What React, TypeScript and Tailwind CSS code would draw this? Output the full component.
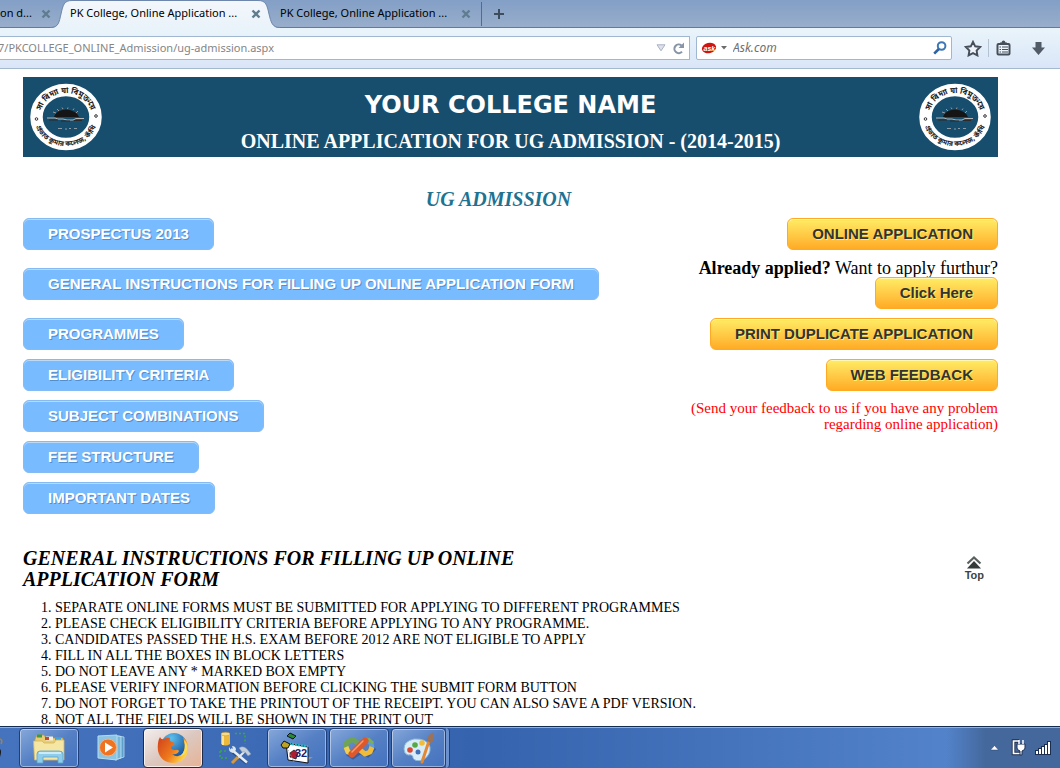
import React from "react";
import type { ReactNode } from "react";

const instructions = [
  "SEPARATE ONLINE FORMS MUST BE SUBMITTED FOR APPLYING TO DIFFERENT PROGRAMMES",
  "PLEASE CHECK ELIGIBILITY CRITERIA BEFORE APPLYING TO ANY PROGRAMME.",
  "CANDIDATES PASSED THE H.S. EXAM BEFORE 2012 ARE NOT ELIGIBLE TO APPLY",
  "FILL IN ALL THE BOXES IN BLOCK LETTERS",
  "DO NOT LEAVE ANY * MARKED BOX EMPTY",
  "PLEASE VERIFY INFORMATION BEFORE CLICKING THE SUBMIT FORM BUTTON",
  "DO NOT FORGET TO TAKE THE PRINTOUT OF THE RECEIPT. YOU CAN ALSO SAVE A PDF VERSION.",
  "NOT ALL THE FIELDS WILL BE SHOWN IN THE PRINT OUT",
];

function CloseIcon() {
  return (
    <svg width="10" height="10" viewBox="0 0 10 10" aria-hidden="true">
      <path d="M1.5 1.5L8.5 8.5M8.5 1.5L1.5 8.5" stroke="#5f7d8f" strokeWidth="2.4" />
    </svg>
  );
}

function Tab({ title, widthClass, active = false }: { title: string; widthClass: string; active?: boolean }) {
  return (
    <div className={`relative flex h-7 shrink-0 items-center ${widthClass}`}>
      {active && (
        <svg className="absolute top-0 -left-5 h-7 w-[230px]" viewBox="0 0 230 28" preserveAspectRatio="none" aria-hidden="true">
          <defs>
            <linearGradient id="tabFill" x1="0" y1="0" x2="0" y2="1">
              <stop offset="0" stopColor="#f3f7fc" />
              <stop offset="1" stopColor="#eaf3fa" />
            </linearGradient>
          </defs>
          <path
            d="M0 28C9 28 9 22 11 14C13 5 14 0.5 22 0.5H208C216 0.5 217 5 219 14C221 22 222 28 230 28Z"
            fill="url(#tabFill)"
          />
          <path
            d="M0 27.5C9 27.5 9 22 11 14C13 5 14 0.5 22 0.5H208C216 0.5 217 5 219 14C221 22 222 27.5 230 27.5"
            fill="none"
            stroke="#6c87ab"
          />
        </svg>
      )}
      <button type="button" role="tab" aria-selected={active} className="relative grow overflow-hidden text-left whitespace-nowrap">
        {title}
      </button>
      <button type="button" aria-label="Close tab" className="relative shrink-0">
        <CloseIcon />
      </button>
    </div>
  );
}

function BrowserChrome() {
  return (
    <header className="shrink-0 font-['Noto_Sans','Open_Sans',sans-serif] text-[11px] text-black">
      <div role="tablist" className="flex h-7 items-center border-b border-[#5f7ba3] bg-linear-to-b from-[#839fc6] to-[#98aecb]">
        <Tab title="on d..." widthClass="w-[51px]" />
        <div className="w-[19px] shrink-0" />
        <Tab title="PK College, Online Application ..." widthClass="w-[191px]" active />
        <div className="w-[19px] shrink-0" />
        <Tab title="PK College, Online Application ..." widthClass="w-[191px]" />
        <div className="ml-2.5 h-6 w-px shrink-0 bg-[#526c8f]" />
        <button type="button" aria-label="Open a new tab" className="ml-3">
          <svg width="10" height="10" viewBox="0 0 10 10" aria-hidden="true">
            <path d="M5 0V10M0 5H10" stroke="#3f4c5d" strokeWidth="2" />
          </svg>
        </button>
      </div>
      <div className="flex h-[41px] items-center border-b border-[#a3b9cd] bg-linear-to-b from-[#e9f4fa] to-[#dae6f8]">
        <div className="flex h-6 min-w-0 grow items-center border border-l-0 border-[#a0b8cf] bg-white">
          <input
            type="text"
            aria-label="Address"
            defaultValue="7/PKCOLLEGE_ONLINE_Admission/ug-admission.aspx"
            className="-ml-0.5 min-w-0 grow text-[#858585] outline-none"
          />
          <button type="button" aria-label="Show history">
            <svg width="10" height="8" viewBox="0 0 10 8" aria-hidden="true">
              <path d="M1 0.8H9L5 6.8Z" fill="#dfe2ec" stroke="#a9b1c4" />
            </svg>
          </button>
          <button type="button" aria-label="Reload" className="mr-1 ml-1.5">
            <svg width="13" height="13" viewBox="0 0 13 13" aria-hidden="true">
              <path d="M9.5 3.5A4.3 4.3 0 1 0 10 9.6" fill="none" stroke="#8795a6" strokeWidth="2.1" />
              <path d="M12 0.5V6H6.5Z" fill="#8795a6" />
            </svg>
          </button>
        </div>
        <div className="ml-1.5 flex h-6 w-64 shrink-0 items-center rounded-xs border border-[#a0b8cf] bg-white">
          <button type="button" aria-label="Choose search engine" className="ml-1 flex items-center gap-1">
            <svg width="16" height="14" viewBox="0 0 16 14" aria-hidden="true">
              <ellipse cx="8" cy="7" rx="7.2" ry="5.2" fill="#d3130d" transform="rotate(-15 8 7)" />
              <text x="2.5" y="9.5" fontSize="7" fontWeight="bold" fontStyle="italic" fill="#fff" fontFamily="Liberation Sans, sans-serif">ask</text>
            </svg>
            <svg width="6" height="4" viewBox="0 0 6 4" aria-hidden="true">
              <path d="M0 0H6L3 3.6Z" fill="#6c6c6c" />
            </svg>
          </button>
          <input type="text" aria-label="Search" placeholder="Ask.com" className="ml-1.5 min-w-0 grow text-xs italic outline-none placeholder:text-[#707070]" />
          <button type="button" aria-label="Run search" className="mr-1">
            <svg width="14" height="14" viewBox="0 0 14 14" aria-hidden="true">
              <circle cx="8.6" cy="5" r="3.8" fill="none" stroke="#3d78b4" strokeWidth="2" />
              <path d="M5.8 8L1.2 12.6" stroke="#2e62a3" strokeWidth="2.6" />
            </svg>
          </button>
        </div>
        <button type="button" aria-label="Bookmark this page" className="ml-3 shrink-0">
          <svg width="18" height="17" viewBox="0 0 18 17" aria-hidden="true">
            <path d="M9 1.8L11.2 6.3L16.1 7L12.6 10.5L13.4 15.4L9 13.1L4.6 15.4L5.4 10.5L1.9 7L6.8 6.3Z" fill="#eef4fa" stroke="#454e5a" strokeWidth="1.9" />
          </svg>
        </button>
        <div className="ml-1.5 h-[18px] w-px shrink-0 bg-[#b4c3d4]" />
        <button type="button" aria-label="Show bookmarks" className="ml-[7px] shrink-0">
          <svg width="15" height="16" viewBox="0 0 15 16" aria-hidden="true">
            <rect x="1.5" y="4" width="12" height="10.5" rx="1" fill="#edf3fa" stroke="#454e5a" strokeWidth="2" />
            <path d="M4 5V2.500H5.500Q6 0.500 7.500 0.500Q9 0.500 9.500 2.500H11V5Z" fill="#454e5a" />
            <path d="M3.500 7H5M6 7H12M3.500 9.500H5M6 9.500H12M3.500 12H5M6 12H12" stroke="#454e5a" strokeWidth="1.200" />
          </svg>
        </button>
        <button type="button" aria-label="Downloads" className="mr-3.5 ml-5 shrink-0">
          <svg width="15" height="15" viewBox="0 0 15 15" aria-hidden="true">
            <path d="M4.500 1H10.500V6.500H14L7.500 14L1 6.500H4.500Z" fill="#515a67" />
          </svg>
        </button>
      </div>
    </header>
  );
}

function CollegeSeal({ id }: { id: string }) {
  return (
    <svg className="h-[68px] w-[74px] shrink-0 overflow-visible" viewBox="0 0 74 68" role="img" aria-label="College seal">
      <defs>
        <path id={`${id}-upper`} d="M11 34A26 24 0 0 1 63 34" />
        <path id={`${id}-lower`} d="M6 36A31 27 0 0 0 68 36" />
      </defs>
      <ellipse cx="37" cy="34" rx="29.500" ry="27" fill="none" stroke="#fff" strokeWidth="12.500" />
      <g fill="#222" fontWeight="bold" fontFamily="Noto Sans Bengali, Noto Sans, sans-serif">
        <text textAnchor="middle" fontSize="8">
          <textPath href={`#${id}-upper`} startOffset="50%">সা বিদ্যা যা বিমুক্তয়ে</textPath>
        </text>
        <text textAnchor="middle" fontSize="7">
          <textPath href={`#${id}-lower`} startOffset="50%">প্রভাত কুমার কলেজ, কাঁথি</textPath>
        </text>
      </g>
      <circle cx="7.500" cy="36" r="1.300" fill="none" stroke="#333" />
      <circle cx="67" cy="33" r="1.300" fill="none" stroke="#333" />
      <path d="M25 34Q27 27 37 26.500Q47 27 50 34Z" fill="#151515" />
      <path d="M24 29L27 30M28 26L30 28M33 24.500L34 26M39 24.500L38.500 26M45 25.500L44 27M49 28L47 30" stroke="#9a9a9a" />
      <path d="M18 35H26L29 36H34L38 37H44L47 35.500H55" fill="none" stroke="#b5b5b5" />
      <path d="M20 37H29M32 38H41M45 37.500H53" stroke="#2a2a2a" />
      <path d="M29 45.500H33M36 46H38M40 45.500H42M45 45.500H48" stroke="#8b9aa3" />
    </svg>
  );
}

function BlueLink({ children }: { children: ReactNode }) {
  return (
    <a
      href="#instructions"
      className="flex h-8 items-center rounded-md border border-[#84bbf3] bg-[#79bbff] px-6 font-['Liberation_Sans',Arial,sans-serif] text-[15px] font-bold text-white shadow-[inset_0_1px_0_#bbdaf7] [text-shadow:1px_1px_0_#528ecc]"
    >
      {children}
    </a>
  );
}

function GoldButton({ children }: { children: ReactNode }) {
  return (
    <button
      type="button"
      className="h-8 rounded-md border border-[#ffaa22] bg-linear-to-b from-[#ffec64] to-[#ffab23] px-6 font-['Liberation_Sans',Arial,sans-serif] text-[15px] font-bold text-[#333333] shadow-[inset_0_1px_0_#fff6af] [text-shadow:1px_1px_0_#ffee66]"
    >
      {children}
    </button>
  );
}

function Page() {
  return (
    <main className="min-h-0 grow overflow-hidden bg-white pt-2 pr-[62px] pl-[23px] font-['Liberation_Serif',Georgia,serif] text-black">
      <div className="flex h-20 items-center justify-between bg-[#174e6d] px-1.5 text-white">
        <CollegeSeal id="seal-left" />
        <div className="pt-[11px] text-center">
          <h1 className="font-['DejaVu_Sans',Verdana,sans-serif] text-2xl leading-9 font-bold">YOUR COLLEGE NAME</h1>
          <p className="text-xl leading-9 font-bold">ONLINE APPLICATION FOR UG ADMISSION - (2014-2015)</p>
        </div>
        <CollegeSeal id="seal-right" />
      </div>

      <h2 className="mt-7 pr-6 text-center text-xl leading-7 font-bold text-[#1d7391] italic">UG ADMISSION</h2>

      <div className="mt-[5px] flex items-start justify-between">
        <nav className="flex flex-col items-start gap-[9px]">
          <BlueLink>PROSPECTUS 2013</BlueLink>
          <div className="py-[9px]">
            <BlueLink>GENERAL INSTRUCTIONS FOR FILLING UP ONLINE APPLICATION FORM</BlueLink>
          </div>
          <BlueLink>PROGRAMMES</BlueLink>
          <BlueLink>ELIGIBILITY CRITERIA</BlueLink>
          <BlueLink>SUBJECT COMBINATIONS</BlueLink>
          <BlueLink>FEE STRUCTURE</BlueLink>
          <BlueLink>IMPORTANT DATES</BlueLink>
        </nav>
        <div className="flex flex-col items-end gap-[9px] text-right">
          <GoldButton>ONLINE APPLICATION</GoldButton>
          <div className="flex flex-col items-end">
            <p className="text-lg leading-[18px]">
              <b>Already applied?</b> Want to apply furthur?
            </p>
            <GoldButton>Click Here</GoldButton>
          </div>
          <GoldButton>PRINT DUPLICATE APPLICATION</GoldButton>
          <GoldButton>WEB FEEDBACK</GoldButton>
          <p className="max-w-[320px] text-[15px] leading-4 text-[#ff0000]">
            (Send your feedback to us if you have any problem regarding online application)
          </p>
        </div>
      </div>

      <section id="instructions" className="mt-[34px]">
        <div className="flex items-start justify-between">
          <h2 className="max-w-[540px] text-xl leading-[21px] font-bold italic">
            GENERAL INSTRUCTIONS FOR FILLING UP ONLINE APPLICATION FORM
          </h2>
          <a href="#" className="mt-2 mr-3.5 flex flex-col items-center font-['Liberation_Sans',Arial,sans-serif] text-[11px] leading-3 font-bold text-[#3c4444]">
            <svg width="16" height="13" viewBox="0 0 16 13" aria-hidden="true">
              <path d="M1.500 7.500L8 1.500L14.500 7.500" fill="none" stroke="#5a6260" strokeWidth="2.200" />
              <path d="M1 12.500L8 5L15 12.500Z" fill="#343c3a" />
            </svg>
            Top
          </a>
        </div>
        <ol className="mt-2.5 list-decimal pl-8 text-sm leading-4">
          {instructions.map((line) => (
            <li key={line}>{line}</li>
          ))}
        </ol>
      </section>
    </main>
  );
}

function TaskButton({
  label,
  widthClass = "w-[60px]",
  open = false,
  active = false,
  children,
}: {
  label: string;
  widthClass?: string;
  open?: boolean;
  active?: boolean;
  children: ReactNode;
}) {
  const look = active
    ? "border-[#1d2c4c] bg-linear-to-br from-[#f3efee] via-[#dcc8c0] to-[#e6b294] shadow-[inset_0_0_0_1px_#ffffffb0]"
    : open
      ? "border-[#1e3f7c] bg-linear-to-br from-[#86a8da] via-[#5580c4] to-[#4472be] shadow-[inset_0_0_0_1px_#ffffff70]"
      : "border-transparent";
  return (
    <button type="button" aria-label={label} className={`flex h-10 shrink-0 items-center justify-center rounded-sm border ${widthClass} ${look}`}>
      {children}
    </button>
  );
}

function ExplorerIcon() {
  return (
    <svg width="34" height="32" viewBox="0 0 34 32" aria-hidden="true">
      <path d="M3 7L5 3H12L14 6H31V27H3Z" fill="#e9cd72" stroke="#b99a45" strokeWidth="0.800" />
      <rect x="5" y="2.500" width="5" height="3" fill="#3c9a44" />
      <rect x="14" y="4.500" width="7" height="4" fill="#f4f0dc" />
      <rect x="13" y="5" width="4" height="3" fill="#c8452f" />
      <rect x="23" y="5" width="6" height="3" fill="#3fa4d8" />
      <path d="M1.500 9H10L12 11H22L24 8H32V28H2.500Z" fill="#f6e6a4" stroke="#cfb566" strokeWidth="0.800" />
      <path d="M5 31V22Q5 19 8 19H27Q31 19 31 22V31H26V25H11V31Z" fill="#8fcdea" stroke="#5aa2cc" strokeWidth="0.800" />
      <path d="M7 21H29" stroke="#dff4fd" strokeWidth="1.500" />
    </svg>
  );
}

function MediaIcon() {
  return (
    <svg width="28" height="27" viewBox="0 0 28 27" aria-hidden="true">
      <path d="M21 2L27 3V23L21 25Z" fill="#5c9fcb" stroke="#b9def0" strokeWidth="0.800" />
      <path d="M18 1.500L24 2.500V24L18 26Z" fill="#76b6da" stroke="#c9e6f4" strokeWidth="0.800" />
      <path d="M1 2L20 1V26L1 24Z" fill="#8cc4e4" stroke="#b6dcee" />
      <circle cx="11" cy="13.500" r="8.500" fill="#ee7422" stroke="#f8b27d" />
      <path d="M8 8.500L16 13.500L8 18.500Z" fill="#fff" />
    </svg>
  );
}

function FirefoxIcon() {
  return (
    <svg width="32" height="32" viewBox="0 0 32 32" aria-hidden="true">
      <defs>
        <radialGradient id="globe" cx="0.4" cy="0.2" r="0.8">
          <stop offset="0" stopColor="#5cc0ee" />
          <stop offset="1" stopColor="#174a94" />
        </radialGradient>
        <linearGradient id="fox" x1="0" y1="0" x2="1" y2="0.6">
          <stop offset="0" stopColor="#cf401b" />
          <stop offset="0.600" stopColor="#ef7a1d" />
          <stop offset="1" stopColor="#fbd648" />
        </linearGradient>
      </defs>
      <circle cx="17" cy="14" r="13" fill="url(#globe)" />
      <path
        d="M3 5Q4 8 7 7Q10 5 13 6Q12 9 15 10Q19 11 17 13L14 15Q14 18 18 18Q21 17 22 19Q20 23 15 22Q21 27 26 21Q29 16 27 9L26 5Q32 10 31 18Q29 30 17 31Q4 31 1 19Q0 10 3 5Z"
        fill="url(#fox)"
      />
      <path d="M27 8Q30 18 23 25Q31 22 30.500 15Q30 10 27 8Z" fill="#fbdc57" />
    </svg>
  );
}

function ToolsIcon() {
  return (
    <svg width="32" height="34" viewBox="0 0 32 34" aria-hidden="true">
      <path d="M16 2.500H26V13M1 20V27H10M1 20H8" fill="none" stroke="#3da642" strokeWidth="1.500" strokeDasharray="2 2" />
      <path d="M2 3V13Q6.500 16 11 13V3Z" fill="#edb93c" />
      <path d="M4 4V14" stroke="#fbe49a" strokeWidth="2" />
      <ellipse cx="6.500" cy="3" rx="4.500" ry="1.800" fill="#f8dc85" stroke="#c99529" strokeWidth="0.500" />
      <path d="M13 20L28 32" stroke="#27508e" strokeWidth="4" />
      <path d="M12 18L28 31.500" stroke="#e8edf2" strokeWidth="2.600" />
      <path d="M10 16Q9 21 14 22L17 19Q17 15 13 15L14 18L12 19Z" fill="#dbe3eb" />
      <path d="M26 20L19 27" stroke="#e5eaf0" strokeWidth="2" />
      <path d="M19 26L13 32" stroke="#db9636" strokeWidth="3" />
      <path d="M20 17Q24 14 28 18L32 23L29 25L26 21L23 21Z" fill="#c1cdda" stroke="#7790ad" strokeWidth="0.500" />
    </svg>
  );
}

function CalendarIcon() {
  return (
    <svg width="34" height="32" viewBox="0 0 34 32" aria-hidden="true">
      <path d="M24 31L33 25H27Z" fill="#8f959d" />
      <path d="M6 11L28 15V31L8 28Z" fill="#fff" stroke="#111" />
      <path d="M9 11.500L28 14.500" stroke="#27b7c3" strokeWidth="2.500" strokeDasharray="2 1" />
      <path d="M7 4L10 1L16 4L13 7Z" fill="#238c36" stroke="#111" />
      <path d="M1 13L4 9L10 12L8 16L3 16Z" fill="#bda224" stroke="#111" />
      <path d="M10 21L14 18L18 21L16 27L10 25Z" fill="#b21d2d" stroke="#111" strokeWidth="0.700" />
      <path d="M8 18L14 30" stroke="#aaa" strokeDasharray="1 1" />
      <text x="15" y="25" fontSize="11" fontWeight="bold" fill="#17216d" fontFamily="Liberation Sans, sans-serif">32</text>
    </svg>
  );
}

function InfinityIcon() {
  return (
    <svg width="34" height="24" viewBox="0 0 34 24" aria-hidden="true">
      <path d="M5 18L11 22L18 17L26 20L33 12" fill="none" stroke="#1f3a6c" strokeWidth="3" opacity="0.450" />
      <path d="M4 12L4.500 7L9 4H12L18 9" fill="none" stroke="#6fa356" strokeWidth="5" strokeLinejoin="round" />
      <path d="M4 11L6 16L11 18" fill="none" stroke="#f0ce4f" strokeWidth="5" strokeLinejoin="round" />
      <path d="M20 5L25 4L29 7L30 12" fill="none" stroke="#5da0d6" strokeWidth="5" strokeLinejoin="round" />
      <path d="M30 11L28 16L23 18L18 14" fill="none" stroke="#f2bc38" strokeWidth="5" strokeLinejoin="round" />
      <path d="M26 2.500L31 7" stroke="#7bb24f" strokeWidth="3" />
      <path d="M10 18L23 5" stroke="#e0572a" strokeWidth="7" strokeLinecap="round" />
      <path d="M10 16L21 5" stroke="#f39b71" strokeWidth="1.500" strokeLinecap="round" />
    </svg>
  );
}

function PaintIcon() {
  return (
    <svg width="34" height="32" viewBox="0 0 34 32" aria-hidden="true">
      <path d="M2 17Q2 9 12 7Q25 6 28 15Q29 23 21 28Q13 30 11 26Q11 22 6 23Q2 22 2 17Z" fill="#d9edf8" stroke="#8cb9d9" />
      <circle cx="8" cy="18" r="2.800" fill="#da4936" />
      <circle cx="13" cy="13" r="2.800" fill="#55aa45" />
      <circle cx="20" cy="11" r="2.800" fill="#f1bd36" />
      <circle cx="16" cy="20" r="2.500" fill="#416fb8" />
      <path d="M20 30L27 9" stroke="#e28734" strokeWidth="3" strokeLinecap="round" />
      <path d="M25 9Q25 3 32 0L32 5Q32 9 29 11Z" fill="#9c7258" />
    </svg>
  );
}

function Taskbar() {
  return (
    <footer className="flex h-[42px] shrink-0 items-center gap-0.5 border-t border-[#152c52] bg-linear-to-r from-[#4673bd] via-[#3563ad] via-45% to-[#5383cb] to-90% shadow-[inset_0_1px_0_#8fb0e0]">
      <button type="button" aria-label="Running program" className="h-10 w-[17px] shrink-0">
        <svg width="5" height="24" viewBox="0 0 5 24" aria-hidden="true">
          <path d="M0 3Q3 4 1 8" fill="none" stroke="#a8823e" strokeWidth="1.500" />
          <path d="M0 13Q2 15 0 21Z" fill="#161616" />
        </svg>
      </button>
      <TaskButton label="File Explorer" open><ExplorerIcon /></TaskButton>
      <TaskButton label="Media Player"><MediaIcon /></TaskButton>
      <TaskButton label="Firefox" active><FirefoxIcon /></TaskButton>
      <TaskButton label="Database Tools"><ToolsIcon /></TaskButton>
      <TaskButton label="Calendar" open><CalendarIcon /></TaskButton>
      <TaskButton label="Visual Studio" open><InfinityIcon /></TaskButton>
      <div className="flex shrink-0 items-center">
        <TaskButton label="Paint" widthClass="w-[55px]" open><PaintIcon /></TaskButton>
        <div className="h-10 w-1 shrink-0 rounded-r-sm border-r border-[#1e3f7c] bg-[#6b91cf]" />
      </div>
      <div className="grow" />
      <div className="flex h-10 shrink-0 items-center bg-linear-to-r from-transparent to-[#44689c] to-35% pr-2 pl-11">
        <button type="button" aria-label="Show hidden icons">
          <svg width="9" height="6" viewBox="0 0 9 6" aria-hidden="true">
            <path d="M0.500 5L4.500 0.500L8.500 5Z" fill="#fff" stroke="#293f69" strokeWidth="0.500" />
          </svg>
        </button>
        <button type="button" aria-label="Power" className="ml-3">
          <svg width="16" height="17" viewBox="0 0 16 17" aria-hidden="true">
            <path d="M8 2H2.500V14.500H9" fill="none" stroke="#1c2e50" strokeWidth="3.500" />
            <path d="M8 2H2.500V14.500H9" fill="none" stroke="#fff" strokeWidth="1.700" />
            <path d="M6 5H14V9Q14 11 11 12V16H9V12Q6 11 6 9Z" fill="#fff" stroke="#1c2e50" />
            <path d="M8 1V5M12 1V5" stroke="#fff" strokeWidth="1.500" />
          </svg>
        </button>
        <button type="button" aria-label="Network" className="ml-2">
          <svg width="17" height="14" viewBox="0 0 17 14" aria-hidden="true">
            <g fill="#fff" stroke="#1c2e50">
              <rect x="0.500" y="9.500" width="3" height="4" />
              <rect x="3.500" y="7.500" width="3" height="6" />
              <rect x="6.500" y="5.500" width="3" height="8" />
              <rect x="9.500" y="3.500" width="3" height="10" />
              <rect x="12.500" y="0.500" width="3" height="13" />
            </g>
          </svg>
        </button>
      </div>
    </footer>
  );
}

export default function App() {
  return (
    <div className="flex h-screen flex-col overflow-hidden bg-white">
      <BrowserChrome />
      <Page />
      <Taskbar />
    </div>
  );
}
